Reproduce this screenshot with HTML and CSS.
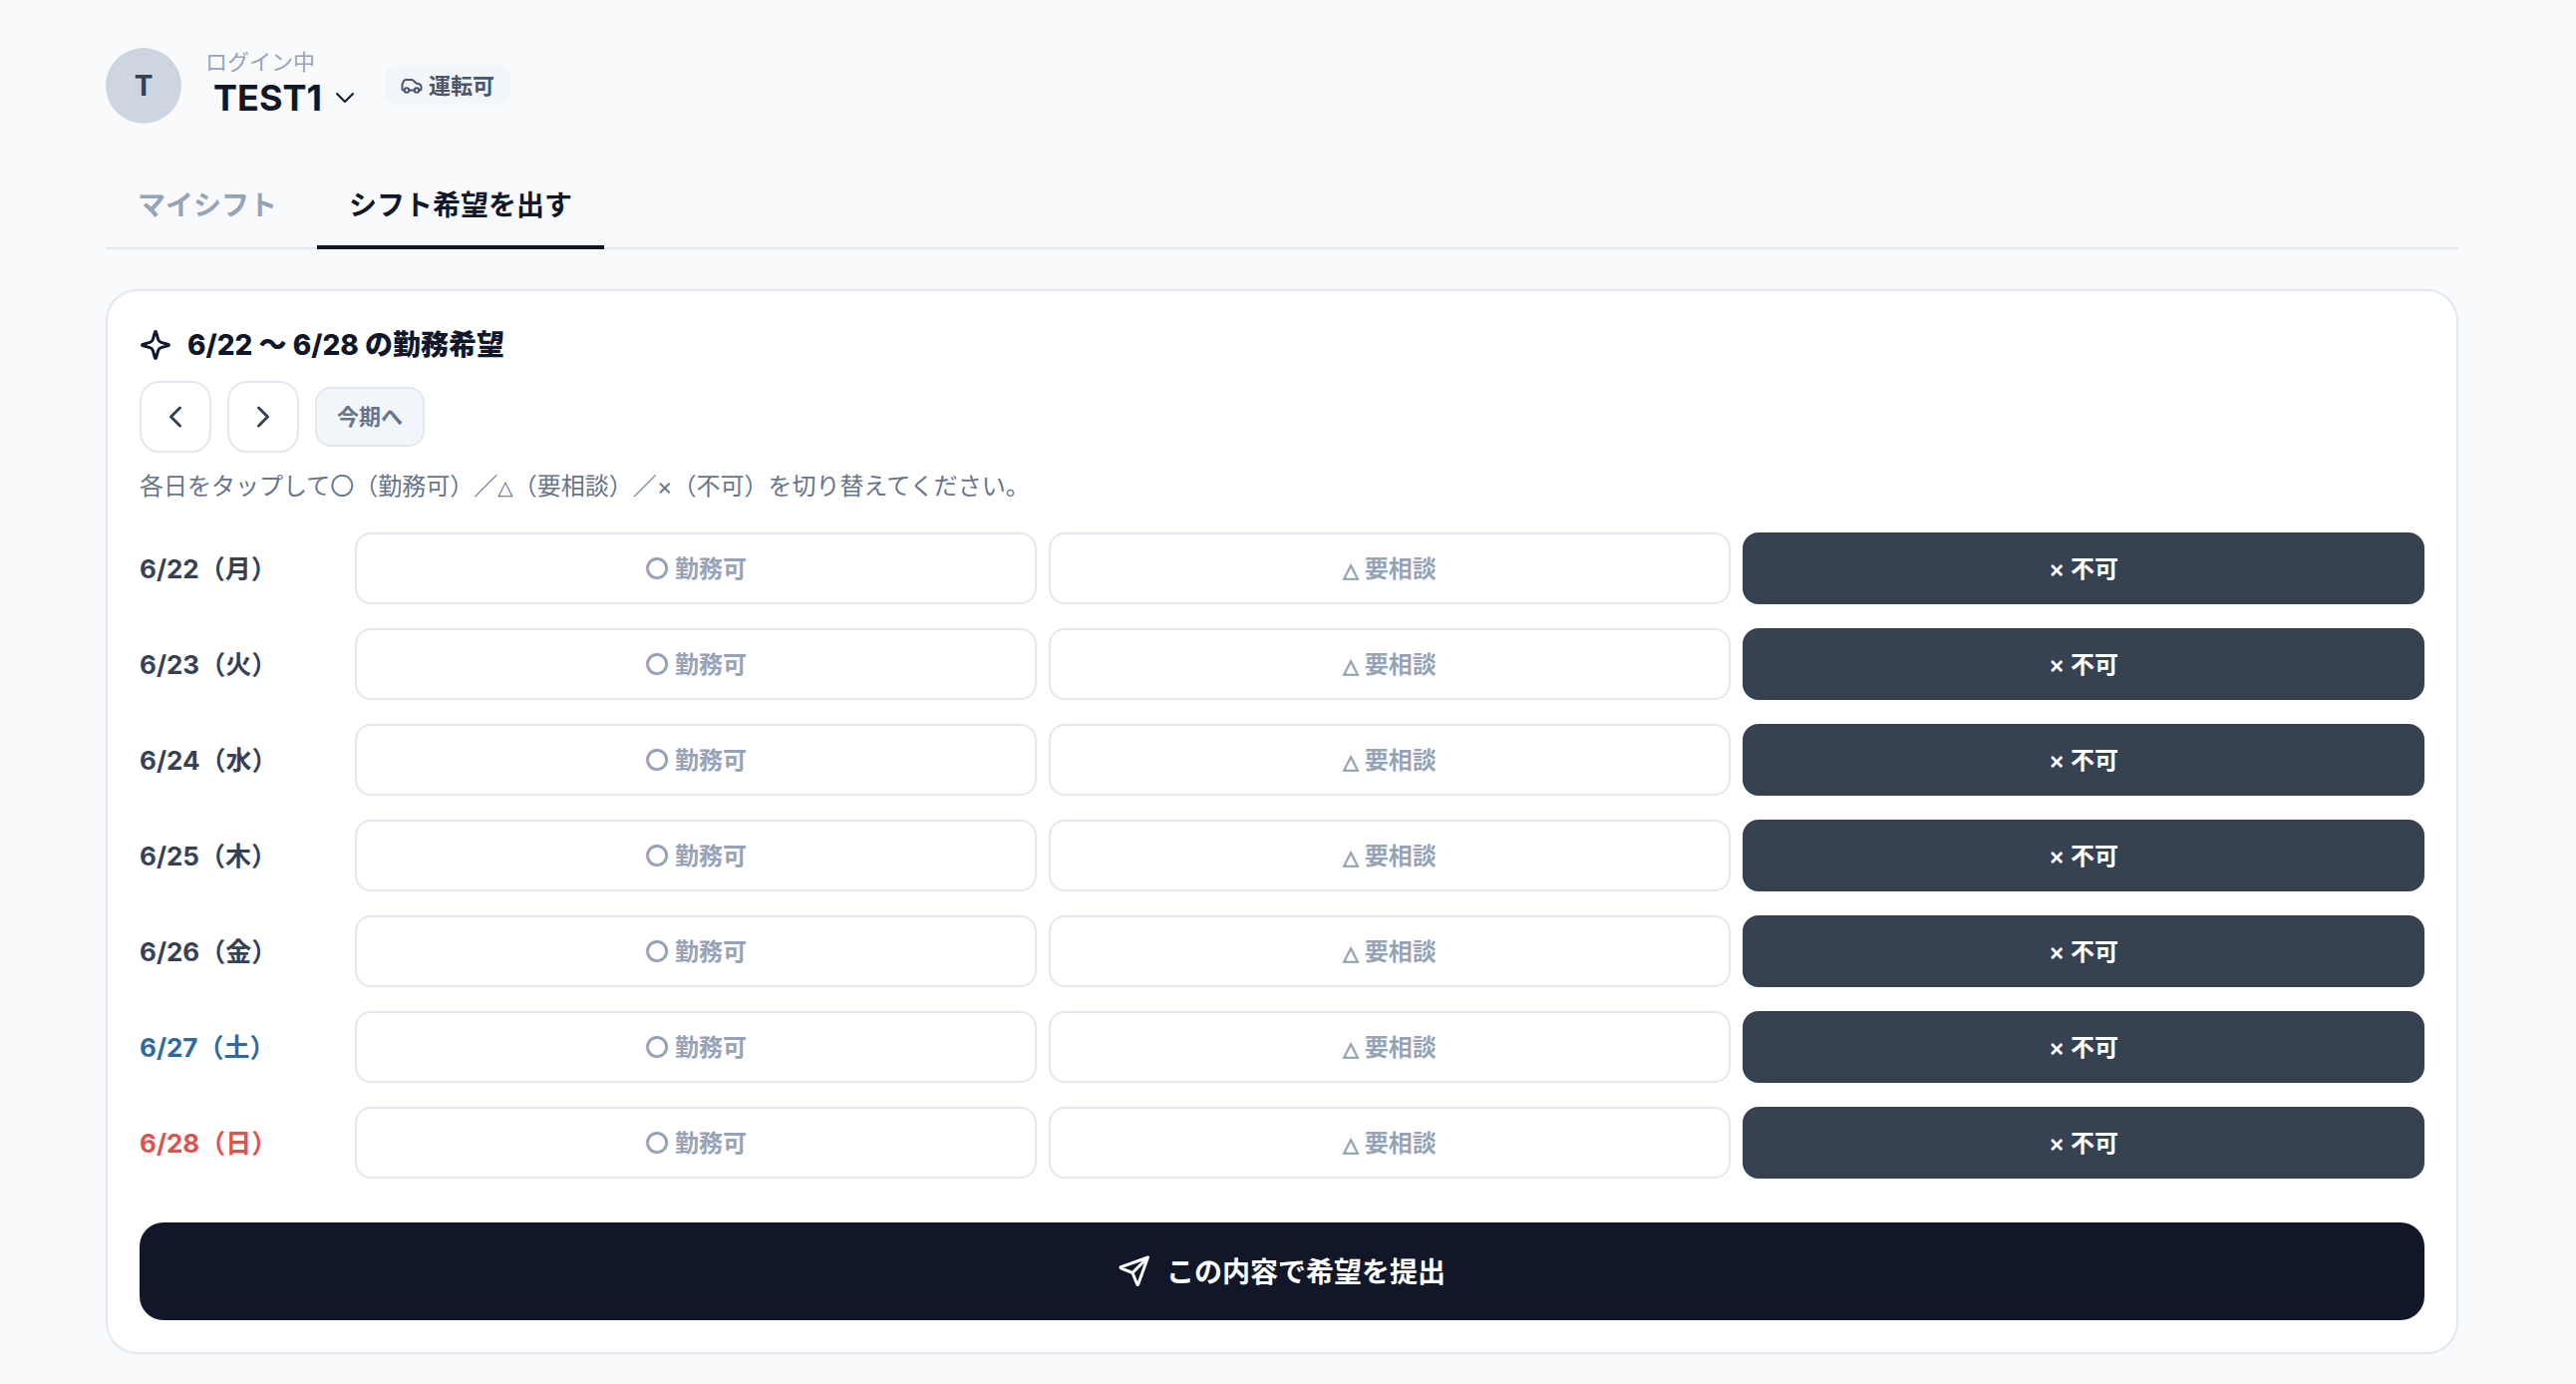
FILE: index.html
```html
<!DOCTYPE html>
<html lang="ja">
<head>
<meta charset="utf-8">
<meta name="viewport" content="width=device-width, initial-scale=1">
<title>シフト希望</title>
<link rel="stylesheet" href="styles.css">
</head>
<body>
<div class="page">
  <header class="user">
    <div class="avatar" aria-hidden="true">T</div>
    <div class="identity">
      <label class="identity-label" for="account">ログイン中</label>
      <div class="account">
        <select class="account-select" id="account"><option>TEST1</option></select>
        <svg class="account-chevron" viewBox="0 0 20 12" aria-hidden="true"><path d="M2 2l8 8 8-8"/></svg>
      </div>
    </div>
    <span class="badge">
      <svg class="badge-icon" viewBox="0 0 22 16" aria-hidden="true"><path d="M3.500 12.500H2.500Q1.500 12.500 1.500 11.500V6.500L3 3.300Q3.700 2 5.200 2H10.500Q11.800 2 12.600 2.800L15.500 5.500 18.500 6.300Q20.500 7 20.500 9V11.500Q20.500 12.500 19.500 12.500H18.500M8.500 12.500H13.500"/><circle cx="6" cy="12.500" r="2.200"/><circle cx="16" cy="12.500" r="2.200"/></svg>
      運転可
    </span>
  </header>

  <nav class="tabs">
    <a class="tab" href="#my-shift">マイシフト</a>
    <a class="tab tab-active" href="#request" aria-current="page">シフト希望を出す</a>
  </nav>

  <main class="card" id="request">
    <h1 class="card-title">
      <svg class="title-icon" viewBox="0 0 32 32" aria-hidden="true"><path d="M16 2.500Q16.500 2.500 16.800 3.800L18.600 10.400Q19.300 12.700 21.600 13.400L28.200 15.200Q29.500 15.500 29.500 16T28.200 16.800L21.600 18.600Q19.300 19.300 18.600 21.600L16.800 28.200Q16.500 29.500 16 29.500T15.200 28.200L13.400 21.600Q12.700 19.300 10.400 18.600L3.800 16.800Q2.500 16.500 2.500 16T3.800 15.200L10.400 13.400Q12.700 12.700 13.400 10.400L15.200 3.800Q15.500 2.500 16 2.500Z"/></svg>
      6/22 〜 6/28 の勤務希望
    </h1>
    <div class="period">
      <button class="period-step" type="button" aria-label="前の期間"><svg class="step-icon" viewBox="0 0 24 24" aria-hidden="true"><path d="M16.500 3L7.500 12l9 9"/></svg></button>
      <button class="period-step" type="button" aria-label="次の期間"><svg class="step-icon" viewBox="0 0 24 24" aria-hidden="true"><path d="M7.500 3l9 9-9 9"/></svg></button>
      <button class="period-now" type="button">今期へ</button>
    </div>
    <p class="hint">各日をタップして〇（勤務可）／<span class="triangle">△</span>（要相談）／×（不可）を切り替えてください。</p>

    <div class="days">
      <div class="day" role="group" aria-labelledby="d22"><span class="date" id="d22">6/22（月）</span><button class="choice" type="button">〇 勤務可</button><button class="choice" type="button"><span class="triangle">△</span> 要相談</button><button class="choice choice-on" type="button" aria-pressed="true">× 不可</button></div>
      <div class="day" role="group" aria-labelledby="d23"><span class="date" id="d23">6/23（火）</span><button class="choice" type="button">〇 勤務可</button><button class="choice" type="button"><span class="triangle">△</span> 要相談</button><button class="choice choice-on" type="button" aria-pressed="true">× 不可</button></div>
      <div class="day" role="group" aria-labelledby="d24"><span class="date" id="d24">6/24（水）</span><button class="choice" type="button">〇 勤務可</button><button class="choice" type="button"><span class="triangle">△</span> 要相談</button><button class="choice choice-on" type="button" aria-pressed="true">× 不可</button></div>
      <div class="day" role="group" aria-labelledby="d25"><span class="date" id="d25">6/25（木）</span><button class="choice" type="button">〇 勤務可</button><button class="choice" type="button"><span class="triangle">△</span> 要相談</button><button class="choice choice-on" type="button" aria-pressed="true">× 不可</button></div>
      <div class="day" role="group" aria-labelledby="d26"><span class="date" id="d26">6/26（金）</span><button class="choice" type="button">〇 勤務可</button><button class="choice" type="button"><span class="triangle">△</span> 要相談</button><button class="choice choice-on" type="button" aria-pressed="true">× 不可</button></div>
      <div class="day" role="group" aria-labelledby="d27"><span class="date date-sat" id="d27">6/27（土）</span><button class="choice" type="button">〇 勤務可</button><button class="choice" type="button"><span class="triangle">△</span> 要相談</button><button class="choice choice-on" type="button" aria-pressed="true">× 不可</button></div>
      <div class="day" role="group" aria-labelledby="d28"><span class="date date-sun" id="d28">6/28（日）</span><button class="choice" type="button">〇 勤務可</button><button class="choice" type="button"><span class="triangle">△</span> 要相談</button><button class="choice choice-on" type="button" aria-pressed="true">× 不可</button></div>
    </div>

    <button class="submit" type="submit">
      <svg class="submit-icon" viewBox="0 0 32 32" aria-hidden="true"><path d="M29.500 3L2.500 12.700Q1.500 13.200 2.500 13.800L14 18.500 18.700 30Q19.200 31 19.700 30L29.500 3ZM14 18.500L29.500 3"/></svg>
      この内容で希望を提出
    </button>
  </main>
</div>
</body>
</html>
```
FILE: styles.css
```css
:root {
  --ink: #111729;
  --slate: #364152;
  --muted: #677489;
  --faint: #97a3b6;
  --line: #e3e8ef;
  --soft: #f2f5fa;
}

* { box-sizing: border-box; }

body {
  margin: 0;
  padding: 48px 118px 30px 106px;
  background: #f9fafc;
  color: var(--ink);
  font-family: Inter, "Noto Sans CJK JP", sans-serif;
  font-size: 24px;
}

button, select { font: inherit; color: inherit; cursor: pointer; }

svg {
  flex: none;
  fill: none;
  stroke: currentColor;
  stroke-width: 2;
  stroke-linecap: round;
  stroke-linejoin: round;
}

.page { max-width: 2360px; margin: 0 auto; }

.user { display: flex; align-items: center; }

.avatar {
  display: grid;
  place-items: center;
  width: 76px;
  height: 76px;
  margin-right: 24px;
  border-radius: 50%;
  background: #cdd5e0;
  color: var(--slate);
  font-size: 28px;
  font-weight: 700;
}

.identity { display: flex; flex-direction: column; padding-bottom: 4px; }
.identity-label { color: var(--faint); font-size: 22px; line-height: 28px; }

.account { display: flex; align-items: center; gap: 12px; }
.account-select {
  appearance: none;
  padding: 0 0 0 8px;
  border: 0;
  background: none;
  font-size: 36px;
  font-weight: 700;
  line-height: 44px;
}
.account-chevron { width: 20px; height: 12px; }

.badge {
  display: flex;
  align-items: center;
  gap: 6px;
  margin-left: 30px;
  padding: 0 16px;
  border-radius: 14px;
  background: var(--soft);
  color: #4a5567;
  font-size: 22px;
  font-weight: 700;
  line-height: 42px;
}
.badge-icon { width: 22px; height: 16px; }

.tabs {
  display: flex;
  gap: 8px;
  height: 90px;
  margin: 36px 0 40px;
  border-bottom: 2px solid var(--line);
}
.tab {
  height: 90px;
  padding: 2px 32px 0;
  border-bottom: 4px solid transparent;
  color: var(--faint);
  font-size: 28px;
  font-weight: 600;
  line-height: 88px;
  text-decoration: none;
}
.tab-active { border-color: var(--ink); color: var(--ink); }

.card {
  padding: 32px;
  border: 2px solid var(--line);
  border-radius: 32px;
  background: #fff;
}

.card-title {
  display: flex;
  align-items: center;
  gap: 16px;
  margin: 0 0 14px;
  font-size: 28px;
  font-weight: 800;
  line-height: 44px;
}
.title-icon { width: 32px; height: 32px; stroke-width: 3; }

.period { display: flex; align-items: center; gap: 16px; }
.period-step {
  display: grid;
  place-items: center;
  width: 72px;
  height: 72px;
  padding: 0;
  border: 2px solid var(--line);
  border-radius: 20px;
  background: #fff;
  color: var(--slate);
}
.step-icon { width: 24px; height: 24px; stroke-width: 3; }
.period-now {
  height: 60px;
  padding: 0 20px 4px;
  border: 2px solid var(--line);
  border-radius: 16px;
  background: var(--soft);
  color: var(--muted);
  font-size: 22px;
  font-weight: 700;
}

.hint { margin: 16px 0 28px; color: var(--muted); line-height: 36px; }
.triangle { font-family: "DejaVu Sans", sans-serif; font-size: 20px; line-height: 1; }

.days { display: grid; gap: 24px; }
.day {
  display: grid;
  grid-template-columns: 204px repeat(3, 1fr);
  gap: 12px;
  align-items: center;
}
.date { padding-bottom: 4px; color: var(--slate); font-size: 26px; font-weight: 700; }
.date-sat { color: #2d6a9f; }
.date-sun { color: #dd524c; }

.choice {
  height: 72px;
  padding: 0 0 4px;
  border: 2px solid var(--line);
  border-radius: 16px;
  background: #fff;
  color: var(--faint);
  font-weight: 600;
}
.choice .triangle { -webkit-text-stroke: 1px currentColor; }
.choice-on { border-color: var(--slate); background: var(--slate); color: #fff; }

.submit {
  display: flex;
  align-items: center;
  justify-content: center;
  gap: 16px;
  width: 100%;
  height: 98px;
  margin-top: 44px;
  padding: 0 0 2px;
  border: 0;
  border-radius: 24px;
  background: var(--ink);
  color: #fff;
  font-size: 28px;
  font-weight: 700;
}
.submit-icon { width: 32px; height: 32px; stroke-width: 3; }
```
